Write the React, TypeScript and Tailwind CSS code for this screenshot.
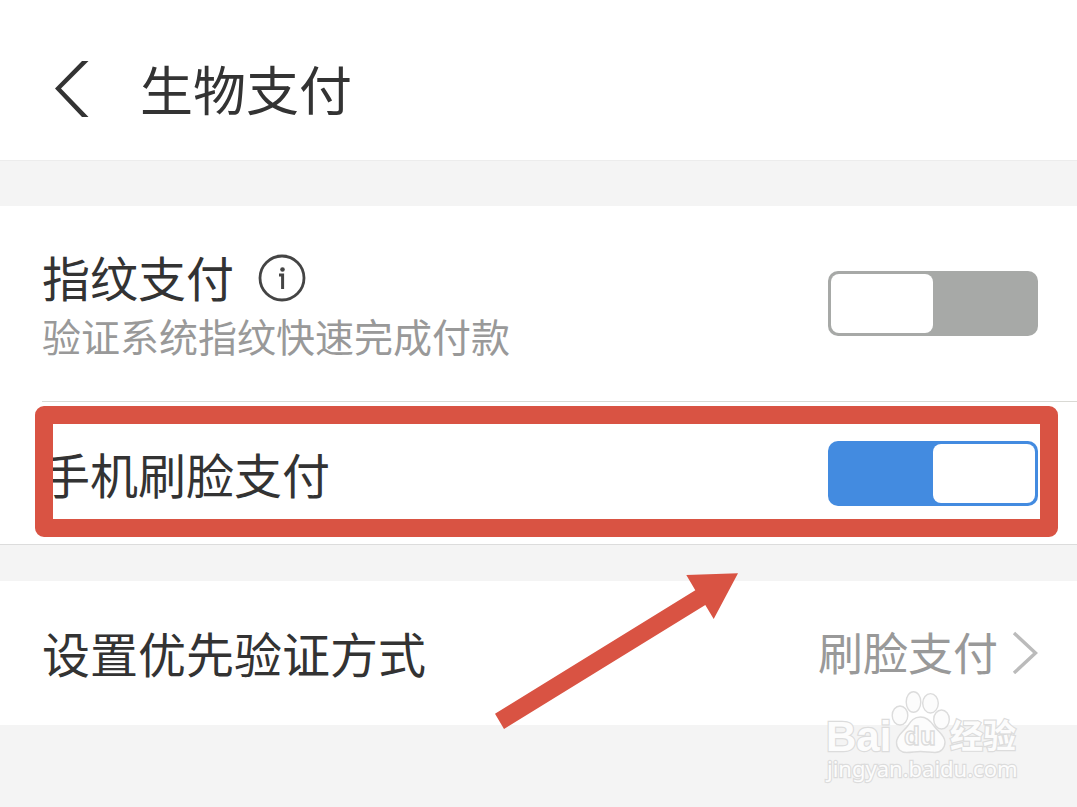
import React, { useState } from "react";

type SwitchProps = {
  id: string;
  checked: boolean;
  onChange: (value: boolean) => void;
};

const Switch = ({ id, checked, onChange }: SwitchProps) => {
  return (
    <input
      id={id}
      type="checkbox"
      role="switch"
      checked={checked}
      onChange={(event) => onChange(event.target.checked)}
      className="flex h-[65px] w-[210px] shrink-0 cursor-pointer appearance-none items-center rounded-[10px] bg-[#a7a9a7] px-[3px] before:h-[59px] before:w-[102px] before:rounded-[8px] before:bg-white before:content-[''] checked:justify-end checked:bg-[#438be0]"
    />
  );
};

const InfoIcon = () => (
  <svg width="48" height="48" viewBox="0 0 48 48" fill="none">
    <circle cx="24" cy="24" r="22" stroke="#444" strokeWidth="2.8" />
    <circle cx="24.5" cy="15.5" r="2.3" fill="#444" />
    <path d="M21 21h3.6V35" stroke="#444" strokeWidth="3" />
  </svg>
);

const Arrow = () => (
  <svg
    width="246"
    height="158"
    viewBox="0 0 246 158"
    className="pointer-events-none absolute -top-[9px] left-[494px]"
  >
    <path
      d="M1 141.7 201.3 18.3 192.3 3 244 1.3 219.7 47 211.3 33 10 157Z"
      fill="#d95343"
    />
  </svg>
);

const Watermark = () => (
  <svg
    width="204"
    height="100"
    viewBox="0 0 204 100"
    className="pointer-events-none absolute right-[53px] -bottom-[65px]"
    fill="#fcfcfc"
    stroke="#dcdcdc"
    strokeWidth="1.4"
  >
    <text
      x="6"
      y="61"
      className="font-['Liberation_Sans',sans-serif] text-[42px] font-bold"
      strokeWidth="2.4"
      paintOrder="stroke"
    >
      Bai
    </text>
    <ellipse cx="80" cy="25.5" rx="7.8" ry="9.5" />
    <ellipse cx="93.5" cy="12" rx="7.3" ry="10.3" />
    <ellipse cx="110.5" cy="13.3" rx="7.8" ry="9.7" />
    <ellipse cx="121.5" cy="29.5" rx="7.8" ry="9.5" />
    <path d="M100.5 27C94 27 91 31 88 35.5 84 41.500 76.500 45 76.500 52.500 76.500 59 81 62.500 86.500 62.500 92 62.500 95 61.500 100.500 61.500 106 61.500 110 62.500 115 62.500 121 62.500 125 58 125 52 125 45 118 41.500 114 36 111 31.500 107.500 27 100.500 27Z" />
    <text
      x="84"
      y="55"
      className="font-['Liberation_Sans',sans-serif] text-[26px] font-bold"
    >
      du
    </text>
    <text
      x="130"
      y="58"
      className="font-['Noto_Sans_CJK_SC',sans-serif] text-[33px] font-bold"
      strokeWidth="2.4"
      paintOrder="stroke"
    >
      经验
    </text>
    <text
      x="7"
      y="87"
      className="font-['Noto_Sans',sans-serif] text-[22px] font-normal"
      strokeWidth="2.4"
      paintOrder="stroke"
    >
      jingyan.baidu.com
    </text>
  </svg>
);

const App = () => {
  const [fingerprint, setFingerprint] = useState(false);
  const [facePay, setFacePay] = useState(true);

  return (
    <div className="min-h-screen w-full bg-[#f4f4f4] font-['Noto_Sans_CJK_SC',sans-serif] text-[#333]">
      <header className="flex h-[161px] items-center gap-[51px] border-b border-[#ececec] bg-white pt-4 pl-[54px]">
        <button type="button" aria-label="返回" className="cursor-pointer">
          <svg width="35" height="58" viewBox="0 0 35 58" fill="none">
            <path d="M28 2H34.5L7 29.5 34.5 58H28L1 29.5Z" fill="#333" />
          </svg>
        </button>
        <h1 className="text-[53px] leading-[60px]">生物支付</h1>
      </header>

      <main className="pt-[45px]">
        <section className="border-b border-[#dcdcdc] bg-white">
          {/* Fingerprint */}
          <div className="flex h-[195px] items-center justify-between pr-[39px] pl-[42px]">
            <div className="pt-0.5">
              <div className="flex items-end gap-6">
                <label htmlFor="fingerprint" className="text-[48px] leading-[60px]">
                  指纹支付
                </label>
                <button
                  type="button"
                  aria-label="说明"
                  className="mb-1 cursor-pointer"
                >
                  <InfoIcon />
                </button>
              </div>
              <p className="text-[39px] leading-[58px] text-[#999]">
                验证系统指纹快速完成付款
              </p>
            </div>
            <Switch
              id="fingerprint"
              checked={fingerprint}
              onChange={setFingerprint}
            />
          </div>

          {/* Face */}
          <div className="relative">
            <div className="ml-[42px] flex h-[143px] items-center justify-between border-t border-[#d9d9d4] pr-[39px]">
              <label htmlFor="face-pay" className="text-[48px] leading-[60px]">
                手机刷脸支付
              </label>
              <Switch id="face-pay" checked={facePay} onChange={setFacePay} />
            </div>
            <div className="pointer-events-none absolute top-[5px] right-[19px] bottom-[7px] left-[35px] rounded-[9px] border-[18px] border-[#d95343]" />
          </div>
        </section>

        <section className="relative mt-9 bg-white">
          <button
            type="button"
            className="flex h-[144px] w-full cursor-pointer items-center justify-between pr-[39px] pb-0.5 pl-[42px]"
          >
            <span className="text-[48px] leading-[60px]">设置优先验证方式</span>
            <span className="flex items-center gap-3.5 text-[45px] leading-[60px] text-[#999]">
              刷脸支付
              <svg width="26" height="44" viewBox="0 0 26 44" fill="none">
                <path d="M2 3 23.5 23 2 43" stroke="#bbb" strokeWidth="3.4" />
              </svg>
            </span>
          </button>
          <Arrow />
          <Watermark />
        </section>
      </main>
    </div>
  );
};

export default App;
